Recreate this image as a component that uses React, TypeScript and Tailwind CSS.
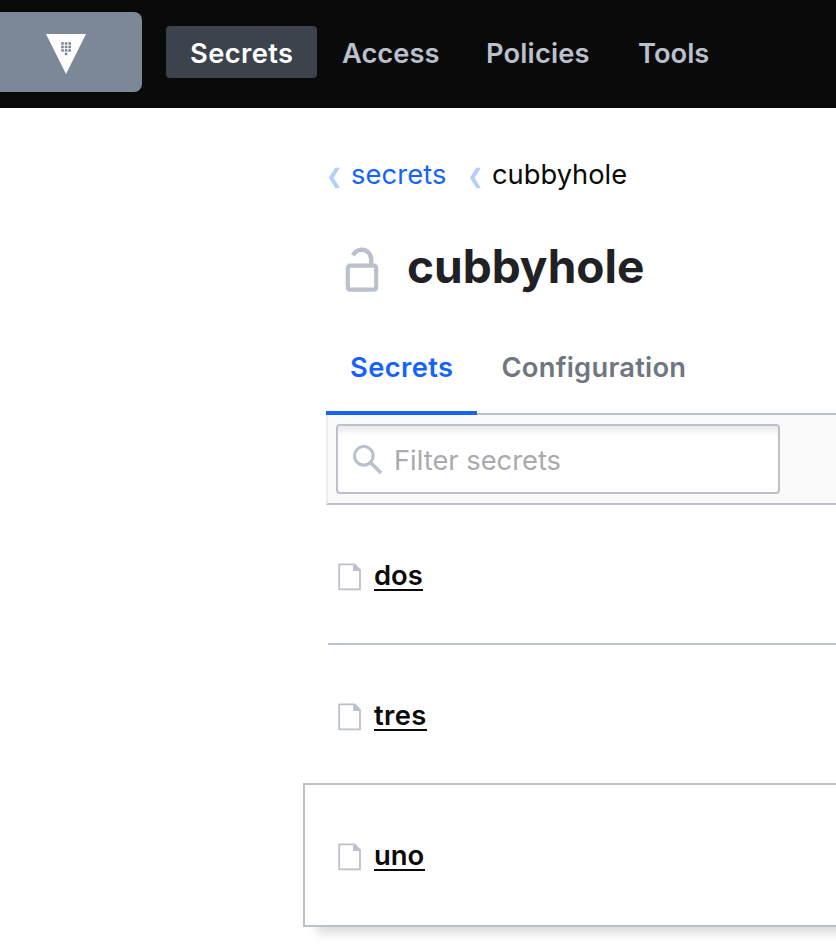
import React from "react";

function VaultLogo() {
  const dots: [number, number][] = [];
  for (let r = 0; r < 3; r++) for (let c = 0; c < 3; c++) dots.push([15.2 + c * 3.6, 8.2 + r * 3.5]);
  dots.push([18.8, 18.7]);
  return (
    <svg width="40" height="40" viewBox="0 0 40 40" className="block">
      <path d="M0 0H40L20 40Z" fill="#fff" />
      {dots.map(([x, y], i) => (
        <rect key={i} x={x} y={y} width="2.6" height="2.5" fill="#7c8797" />
      ))}
    </svg>
  );
}

function Chevron() {
  return (
    <svg width="12" height="22" viewBox="0 0 12 22" className="block">
      <path d="M7.2 0.8H11.8L5.6 10.8L11.8 21H7.2L0.9 10.8Z" fill="#b3cfff" />
    </svg>
  );
}

function Unlock() {
  return (
    <svg width="34" height="46" viewBox="0 0 34 46" fill="none" stroke="#bac1cc" className="block">
      <rect x="2.8" y="18.6" width="28.4" height="24" rx="2.2" strokeWidth="4.2" />
      <path d="M7.9 8.4C9.8 4.9 12.8 2.8 16.6 2.8C22 2.8 26.2 6.8 26.2 12.4V18" strokeWidth="4.4" />
    </svg>
  );
}

function FileIcon() {
  return (
    <svg width="24" height="28" viewBox="0 0 24 28" className="block">
      <path d="M1.2 1.3H16.4L22 7.2V26.3H1.2Z" fill="#fff" stroke="#bac1cc" strokeWidth="1.8" strokeLinejoin="round" />
      <path d="M15.2 1H16.9L22.4 6.8V8H15.2Z" fill="#bac1cc" />
    </svg>
  );
}

function Row({ name, width }: { name: string; width: string }) {
  return (
    <div className="flex items-start pt-[52px]">
      <div className="mt-[6px] w-[37px] pl-px"><FileIcon /></div>
      <a className={`h-[34px] border-b-2 border-[#0a0a0a] text-[27.4px] leading-[36px] font-semibold whitespace-nowrap text-[#0a0a0a] ${width}`}>{name}</a>
    </div>
  );
}

export default function App() {
  return (
    <div className="h-[950px] w-[836px] overflow-hidden bg-white font-['Inter',sans-serif] text-[#0a0a0a]">
      <header className="flex h-[108px] bg-[#0a0a0a] text-[27.3px] leading-[56px] font-semibold text-[#bac1cc]">
        <div className="mt-3 h-20 w-[142px] rounded-r-lg bg-[#7c8797] pt-[22px] pl-[46px]"><VaultLogo /></div>
        <nav className="mt-[26px] ml-6 flex h-[52px] whitespace-nowrap">
          <a className="w-[151px] rounded bg-[#3d434c] pl-[24px] tracking-[0.4px] text-white">Secrets</a>
          <a className="w-[145px] pl-[25px]">Access</a>
          <a className="w-[152px] pl-[24px] tracking-[0.15px]">Policies</a>
          <a className="pl-[24px]">Tools</a>
        </nav>
      </header>
      <main className="ml-[303px] flex flex-col">
        <nav className="ml-[25px] flex h-[122px] pt-[48px] text-[27.3px] leading-[38px] whitespace-nowrap">
          <div className="mt-[11px] w-[23px]"><Chevron /></div>
          <a className="w-[118px] tracking-[0.1px] text-[#1563ff]">secrets</a>
          <div className="mt-[11px] w-[23px]"><Chevron /></div>
          <span>cubbyhole</span>
        </nav>
        <div className="ml-[42px] flex h-[110px] pt-[10px]">
          <div className="mt-[7px] w-[62px]"><Unlock /></div>
          <h1 className="text-[46px] leading-[52px] font-bold whitespace-nowrap text-[#1f2124]">cubbyhole</h1>
        </div>
        <div className="ml-[23px] flex h-[75px] border-b-2 border-[#bac1cc] text-[27.3px] leading-[55px] font-semibold whitespace-nowrap">
          <a className="h-[75px] w-[151px] border-b-4 border-[#1563ff] pl-[24px] tracking-[0.4px] text-[#1563ff]">Secrets</a>
          <a className="pl-[24.5px] tracking-[0.25px] text-[#6f7682]">Configuration</a>
        </div>
        <div className="ml-[23px] h-[90px] border-b-2 border-l-2 border-b-[#bac1cc] border-l-[#ebeef2] bg-[#fafafa] pt-[9px] pl-2">
          <div className="flex h-[70px] w-[444px] rounded border-2 border-[#bac1cc] bg-white pl-[15px] shadow-[inset_0_8px_4px_-2px_#eeeeee]">
            <svg width="30" height="30" viewBox="0 0 30 30" fill="none" stroke="#bac1cc" className="mt-[19px] block">
              <circle cx="10.8" cy="10.8" r="9.3" strokeWidth="3.1" />
              <path d="M18 18L28 28" strokeWidth="3.6" />
            </svg>
            <span className="ml-[11px] text-[27.3px] leading-[70px] whitespace-nowrap text-[#a9aaad]">Filter secrets</span>
          </div>
        </div>
        <div className="ml-[25px] h-[140px] border-b-2 border-[#bac1cc] pl-[9px]"><Row name="dos" width="w-[49px]" /></div>
        <div className="ml-[25px] h-[138px] pl-[9px]"><Row name="tres" width="w-[53px] tracking-[0.4px]" /></div>
        <div className="-mr-8 h-[144px] border-2 border-[#bac1cc] bg-white pl-[32px] shadow-[8px_12px_10px_-6px_rgba(0,0,0,0.15)]"><Row name="uno" width="w-[51px]" /></div>
      </main>
    </div>
  );
}
